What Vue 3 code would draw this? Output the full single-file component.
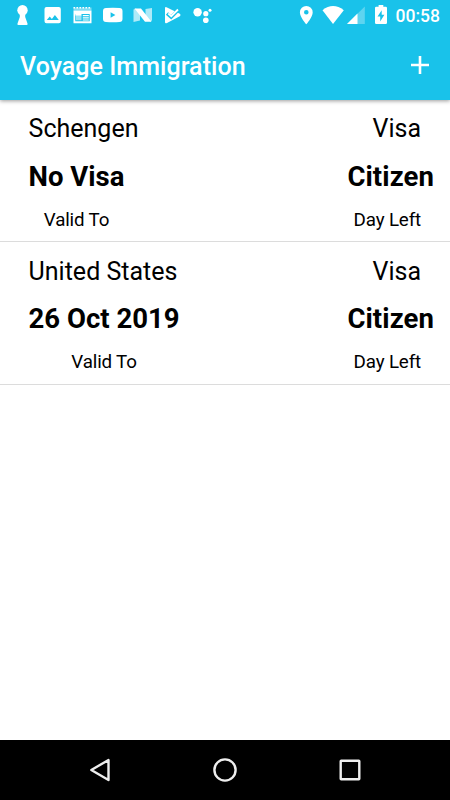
<script setup>
const visas = [
  { region: 'Schengen', valid: 'No Visa', kind: 'Visa', left: 'Citizen' },
  { region: 'United States', valid: '26 Oct 2019', kind: 'Visa', left: 'Citizen' },
]
</script>

<template>
  <div class="screen">
    <header class="top">
      <div class="status">
        <div class="notifications">
          <svg viewBox="0 0 30 30"><circle cx="14.500" cy="10.200" r="5.200" /><path d="M11.800 13h5.400v4l2.300 6.500q.5 1.500-1 1.500h-8q-1.500 0-1-1.500l2.300-6.500z" /></svg>
          <svg viewBox="0 0 30 30"><path fill-rule="evenodd" d="M8.500 7h12.300a2 2 0 0 1 2 2v12.200a2 2 0 0 1-2 2H8.500a2 2 0 0 1-2-2V9a2 2 0 0 1 2-2zM8.800 20h12l-3.900-5-3 4-2.200-2.500z" /></svg>
          <svg viewBox="0 0 30 30">
            <path d="M5.500 7.500h18v3h-18z" opacity=".45" />
            <path d="M5.500 7H7v1.500H5.500zM8.500 7H10v1.500H8.500zM11.500 7H13v1.500h-1.500zM14.500 7H16v1.500h-1.500zM17.500 7H19v1.500h-1.500zM20.500 7H22v1.500h-1.500z" />
            <path fill-rule="evenodd" d="M5.500 10.500h18v12.700h-18zM7.300 14v7.300h14.400V14z" />
            <path d="M8 15h5.500v5.300H8z" opacity=".55" />
            <path d="M7.300 14h6.200v1.500H7.300zM14.800 15h6v1.200h-6zM14.800 17.300h6v1.200h-6zM14.800 19.600h6v1h-6z" />
          </svg>
          <svg viewBox="0 0 30 30"><path fill-rule="evenodd" d="M8 8q7-.6 13.500 0 3 .2 3 3v8q0 2.800-3 3-6.500.6-13.500 0-3-.2-3-3v-8q0-2.800 3-3zM12.600 12.300v5.500l4.800-2.750z" /></svg>
          <svg viewBox="0 0 30 30"><path opacity=".65" d="M5.500 9.500 8 8.500l4 5v7l-6.500 1.500zM17.500 9l6.500-1v12.500l-2 1-4.500-5z" /><path d="M6.500 8.500H13L23.500 21.800H17z" /></svg>
          <svg viewBox="0 0 30 30"><path d="M7 8.500Q7 6.400 9 7.500l12.800 6.300q1.800 1.200 0 2.400L9 23q-2 1-2-1z" /><path class="check-gap" d="m9 13.500 4.200 3.700 7.300-7.300" /><path class="check" d="m10.300 13.500 3 2.700 6.700-6.700" /></svg>
          <svg viewBox="0 0 30 30"><circle cx="9.600" cy="12.200" r="4.200" /><circle cx="17.800" cy="13.700" r="2.600" /><circle cx="22" cy="10.200" r="1.500" /><circle cx="17.800" cy="20.200" r="2.800" /></svg>
        </div>
        <div class="system">
          <svg viewBox="0 0 25 30"><path fill-rule="evenodd" d="M11.300 6a6.400 6.400 0 0 1 6.400 6.400c0 4.700-6.400 11.900-6.400 11.900S4.900 17.100 4.900 12.400A6.400 6.400 0 0 1 11.300 6zm0 4a2.300 2.300 0 1 0 0 4.600 2.300 2.300 0 0 0 0-4.600z" /></svg>
          <svg viewBox="0 0 25 30"><path d="M2.500 10.200Q13 2 23.800 10.200L13 24z" /></svg>
          <svg viewBox="0 0 25 30"><path opacity=".3" d="M19.800 6.500V24H2z" /><path d="M12.500 13.600V24H2z" /></svg>
          <svg viewBox="0 0 25 30"><path fill-rule="evenodd" d="M8.600 5h4.700v1.800h2.400q1.300 0 1.300 1.300v14.700q0 1.300-1.300 1.300H6.300q-1.300 0-1.300-1.300V8.100q0-1.300 1.300-1.300h2.300zM11.700 10.300 7.500 16.500h2.700v5l4.200-6.800h-2.700z" /></svg>
          <span class="clock">00:58</span>
        </div>
      </div>
      <div class="toolbar">
        <h1>Voyage Immigration</h1>
        <svg class="add" viewBox="0 0 20 20"><path d="M8.700 1h2.600v7.700H19v2.600h-7.700V19H8.700v-7.700H1V8.700h7.700z" /></svg>
      </div>
    </header>

    <main>
      <section v-for="visa in visas" :key="visa.region" class="row">
        <div class="column start">
          <p class="name">{{ visa.region }}</p>
          <div class="detail">
            <p class="value">{{ visa.valid }}</p>
            <p class="label">Valid To</p>
          </div>
        </div>
        <div class="column end">
          <p class="name">{{ visa.kind }}</p>
          <p class="value">{{ visa.left }}</p>
          <p class="label">Day Left</p>
        </div>
      </section>
    </main>

    <nav class="navigation">
      <svg viewBox="0 0 30 30"><path d="M23.500 5v20L6.300 15z" /></svg>
      <svg viewBox="0 0 30 30"><circle cx="15" cy="15" r="10.600" /></svg>
      <svg viewBox="0 0 30 30"><rect x="5.700" y="5.700" width="18.600" height="18.600" rx=".5" /></svg>
    </nav>
  </div>
</template>

<style>
body {
  margin: 0;
}
</style>

<style scoped>
.screen {
  display: flex;
  flex-direction: column;
  width: 450px;
  height: 800px;
  overflow: hidden;
  background: #fff;
  color: #000;
  font-family: Roboto, sans-serif;
}
h1,
p {
  margin: 0;
  font-weight: 400;
  white-space: nowrap;
}
.top {
  height: 100px;
  flex: none;
  background: #19c2ea;
  color: #fff;
  fill: #fff;
  box-shadow: 0 1px 4px rgba(0, 0, 0, 0.4);
}
.status {
  display: flex;
  justify-content: space-between;
  height: 30px;
  padding: 0 10px 0 8px;
}
.notifications,
.system {
  display: flex;
}
.notifications svg {
  width: 30px;
  height: 30px;
}
.system svg {
  width: 25px;
  height: 30px;
}
.check,
.check-gap {
  fill: none;
  stroke: #fff;
  stroke-width: 1.8;
}
.check-gap {
  stroke: #19c2ea;
  stroke-width: 3.4;
}
.clock {
  width: 45px;
  font-size: 17.5px;
  font-weight: 500;
  line-height: 32px;
  text-align: right;
}
.toolbar {
  display: flex;
  align-items: center;
  justify-content: space-between;
  height: 70px;
  padding: 0 20px;
}
h1 {
  padding-top: 3px;
  font-size: 25px;
  font-weight: 500;
  letter-spacing: 0.05px;
  line-height: 30px;
}
.add {
  width: 20px;
  height: 20px;
  margin-bottom: 1px;
}
main {
  flex: 1;
}
.row {
  display: flex;
  justify-content: space-between;
  box-sizing: border-box;
  height: 142.4px;
  padding: 14.2px 16px 0 28.6px;
  border-bottom: 1px solid #dcdcdc;
}
.column {
  display: flex;
  flex-direction: column;
}
.start {
  align-items: flex-start;
}
.detail {
  display: flex;
  flex-direction: column;
  align-items: center;
}
.end {
  align-items: flex-end;
}
.name {
  font-size: 25px;
  line-height: 30px;
}
.value {
  margin-top: 15.4px;
  font-size: 27.5px;
  font-weight: 700;
  line-height: 34px;
}
.end .value {
  letter-spacing: 0.1px;
}
.label {
  margin-top: 14px;
  font-size: 18.75px;
  letter-spacing: -0.15px;
  line-height: 24px;
}
.end .name,
.end .label {
  padding-right: 13px;
}
.navigation {
  display: flex;
  flex: none;
  justify-content: center;
  align-items: center;
  gap: 95px;
  height: 60px;
  background: #000;
}
.navigation svg {
  width: 30px;
  height: 30px;
  fill: none;
  stroke: #eee;
  stroke-width: 2.4;
  stroke-linejoin: round;
}
</style>
